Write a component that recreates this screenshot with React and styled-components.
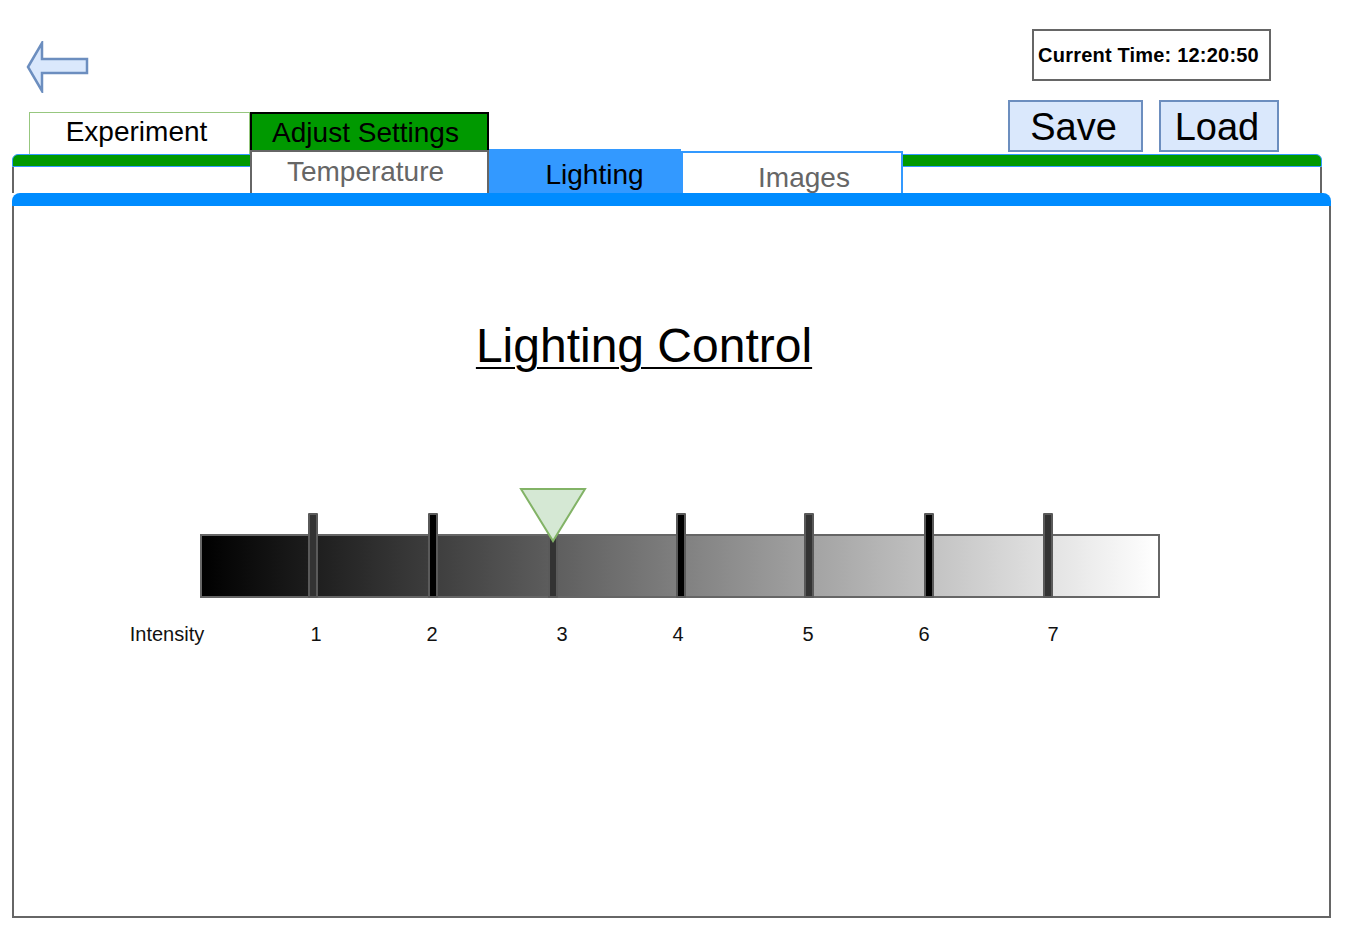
import React from 'react'
import styled, { createGlobalStyle } from 'styled-components'

const GlobalStyle = createGlobalStyle`
  body {
    margin: 0;
    background: #ffffff;
    font-family: "Liberation Sans", Arial, sans-serif;
  }
`

const Page = styled.div`
  width: 1351px;
  height: 929px;
  overflow: hidden;
  color: #000000;
`

const Header = styled.header`
  display: flex;
  justify-content: space-between;
  height: 100px;
  padding: 0 80px 0 26px;
  box-sizing: border-box;
`

const BackArrow = styled.svg`
  margin-top: 41px;
  width: 64px;
  height: 52px;
  cursor: pointer;
`

const TimeBox = styled.div`
  margin-top: 29px;
  width: 239px;
  height: 52px;
  box-sizing: border-box;
  border: 2px solid #666666;
  display: flex;
  align-items: center;
  justify-content: center;
  padding-right: 6px;
  font-size: 20px;
  font-weight: 700;
  letter-spacing: 0.2px;
`

const TabRow = styled.div`
  display: flex;
  justify-content: space-between;
  align-items: flex-end;
  height: 54px;
  padding: 0 72px 0 29px;
`

const MainTabs = styled.nav`
  display: flex;
  align-items: flex-end;
`

const MainTab = styled.div`
  width: ${p => p.$width}px;
  height: ${p => (p.$active ? 40 : 42)}px;
  margin-bottom: ${p => (p.$active ? 2 : 0)}px;
  box-sizing: border-box;
  border: ${p => (p.$active ? '2px solid #000000' : '1px solid #97c77f')};
  border-bottom: none;
  background: ${p => (p.$active ? '#009900' : '#ffffff')};
  display: flex;
  justify-content: center;
  padding-top: 3px;
  padding-right: ${p => (p.$active ? 8 : 6)}px;
  font-size: 28px;
  line-height: 32px;
`

const Actions = styled.div`
  display: flex;
  gap: 16px;
  margin-bottom: 2px;
`

const ActionButton = styled.button`
  width: ${p => p.$width}px;
  height: 52px;
  box-sizing: border-box;
  border: 2px solid #6c8ebf;
  background: #dae8fc;
  font-family: inherit;
  font-size: 38px;
  line-height: 40px;
  color: #000000;
  padding: 2px 4px 0 0;
  cursor: pointer;
`

const SettingsFrame = styled.div`
  margin-left: 12px;
  width: 1310px;
`

const GreenBar = styled.div`
  height: 13px;
  box-sizing: border-box;
  background: #009900;
  border: 1px solid #3399ff;
  border-radius: 6px 6px 0 0;
`

const Shelf = styled.div`
  display: flow-root;
  height: 26px;
  box-sizing: border-box;
  border-left: 2px solid #666666;
  border-right: 2px solid #666666;
`

const SubTabs = styled.div`
  display: flex;
  align-items: flex-end;
  height: 44px;
  margin: -18px 0 0 236px;
`

const SubTab = styled.div`
  width: ${p => p.$width}px;
  height: ${p => p.$height}px;
  box-sizing: border-box;
  border: 2px solid ${p => p.$border};
  border-bottom: none;
  background: ${p => p.$fill};
  color: ${p => p.$color};
  display: flex;
  justify-content: center;
  padding-top: ${p => p.$textTop}px;
  padding-left: ${p => Math.max(p.$shift, 0)}px;
  padding-right: ${p => Math.max(-p.$shift, 0)}px;
  font-size: 28px;
  line-height: 32px;
`

const BlueBar = styled.div`
  margin-left: 12px;
  width: 1319px;
  height: 13px;
  background: #008cff;
  border-radius: 8px 8px 0 0;
`

const Panel = styled.main`
  display: flow-root;
  margin-left: 12px;
  width: 1319px;
  height: 712px;
  box-sizing: border-box;
  border: 2px solid #666666;
  border-top: none;
`

const Title = styled.h1`
  margin: 112px 0 0;
  padding-right: 55px;
  text-align: center;
  font-size: 48px;
  font-weight: 400;
  line-height: 56px;
  text-decoration: underline;
  text-decoration-thickness: 2px;
  text-underline-offset: 5px;
`

const Scale = styled.div`
  position: relative;
  margin: 114px 0 0 186px;
  width: 960px;
  padding-top: 46px;
`

const GradientBar = styled.div`
  height: 64px;
  box-sizing: border-box;
  border: 2px solid #666666;
  background: linear-gradient(to right, #000000, #ffffff);
`

const Tick = styled.div`
  position: absolute;
  top: 25px;
  width: 10px;
  height: 85px;
  box-sizing: border-box;
  border: 2px solid #5a5a5a;
  border-radius: 1px;
  background: ${p => p.$fill};
`

const Pointer = styled.svg`
  position: absolute;
  top: 0;
  left: 320px;
  width: 66px;
  height: 54px;
  overflow: visible;
`

const ScaleLabels = styled.div`
  position: relative;
  margin: 24px 0 0 186px;
  width: 960px;
  height: 24px;
`

const ScaleLabel = styled.span`
  position: absolute;
  top: 0;
  transform: translateX(-50%);
  font-size: 20px;
  line-height: 24px;
  color: #111111;
  white-space: nowrap;
`

const ticks = [
  { x: 308, fill: '#333333' },
  { x: 428, fill: '#000000' },
  { x: 548, fill: '#333333' },
  { x: 676, fill: '#000000' },
  { x: 804, fill: '#333333' },
  { x: 924, fill: '#000000' },
  { x: 1043, fill: '#333333' },
]

const labels = [
  { x: 167, text: 'Intensity' },
  { x: 316, text: '1' },
  { x: 432, text: '2' },
  { x: 562, text: '3' },
  { x: 678, text: '4' },
  { x: 808, text: '5' },
  { x: 924, text: '6' },
  { x: 1053, text: '7' },
]

export default function App() {
  return (
    <Page>
      <GlobalStyle />
      <Header>
        <BackArrow viewBox="0 0 64 52">
          <polygon
            points="2,26 16,2 16,18 61,18 61,32 16,32 16,50"
            fill="#dae8fc"
            stroke="#6c8ebf"
            strokeWidth="2.5"
            strokeLinejoin="miter"
          />
        </BackArrow>
        <TimeBox>Current Time: 12:20:50</TimeBox>
      </Header>

      <TabRow>
        <MainTabs>
          <MainTab $width={221}>Experiment</MainTab>
          <MainTab $width={239} $active>Adjust Settings</MainTab>
        </MainTabs>
        <Actions>
          <ActionButton $width={135}>Save</ActionButton>
          <ActionButton $width={120}>Load</ActionButton>
        </Actions>
      </TabRow>

      <SettingsFrame>
        <GreenBar />
        <Shelf>
          <SubTabs>
            <SubTab $width={239} $height={43} $border="#666666" $fill="#ffffff" $color="#666666" $textTop={4} $shift={-8}>
              Temperature
            </SubTab>
            <SubTab $width={192} $height={44} $border="#3399ff" $fill="#3399ff" $color="#000000" $textTop={8} $shift={19}>
              Lighting
            </SubTab>
            <SubTab $width={222} $height={42} $border="#3399ff" $fill="#ffffff" $color="#666666" $textTop={9} $shift={24}>
              Images
            </SubTab>
          </SubTabs>
        </Shelf>
      </SettingsFrame>

      <BlueBar />
      <Panel>
        <Title>Lighting Control</Title>
        <Scale>
          <GradientBar />
          {ticks.map(t => (
            <Tick key={t.x} $fill={t.fill} style={{ left: t.x - 200 }} />
          ))}
          <Pointer viewBox="0 0 66 54">
            <polygon points="1,1 65,1 33,53" fill="#d5e8d4" stroke="#82b366" strokeWidth="2" />
          </Pointer>
        </Scale>
        <ScaleLabels>
          {labels.map(l => (
            <ScaleLabel key={l.text} style={{ left: l.x - 200 }}>
              {l.text}
            </ScaleLabel>
          ))}
        </ScaleLabels>
      </Panel>
    </Page>
  )
}
